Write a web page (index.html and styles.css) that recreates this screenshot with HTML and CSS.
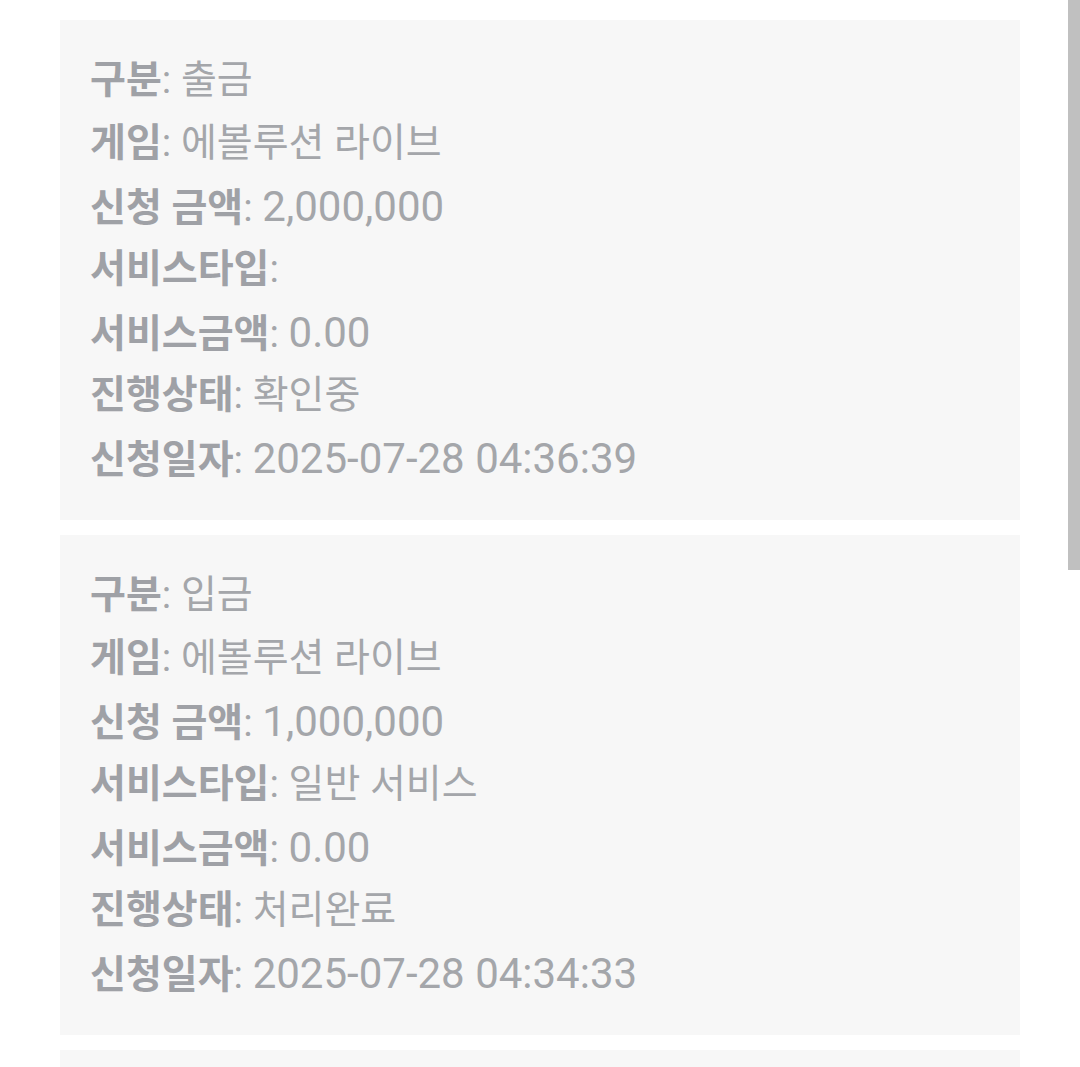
FILE: index.html
```html
<!DOCTYPE html>
<html lang="ko">
<head>
    <meta charset="UTF-8">
    <meta name="viewport" content="width=device-width, initial-scale=1.0">
    <title>입출금 내역</title>
    <link rel="stylesheet" href="styles.css">
</head>
<body>
    <div class="history">
        <div class="history-item">
            <p><b>구분</b>: 출금</p>
            <p><b>게임</b>: 에볼루션 라이브</p>
            <p><b>신청 금액</b>: <span class="num">2,000,000</span></p>
            <p><b>서비스타입</b>: </p>
            <p><b>서비스금액</b>: <span class="num">0.00</span></p>
            <p><b>진행상태</b>: 확인중</p>
            <p><b>신청일자</b>: <span class="num">2025-07-28 04:36:39</span></p>
        </div>
        <div class="history-item">
            <p><b>구분</b>: 입금</p>
            <p><b>게임</b>: 에볼루션 라이브</p>
            <p><b>신청 금액</b>: <span class="num">1,000,000</span></p>
            <p><b>서비스타입</b>: 일반 서비스</p>
            <p><b>서비스금액</b>: <span class="num">0.00</span></p>
            <p><b>진행상태</b>: 처리완료</p>
            <p><b>신청일자</b>: <span class="num">2025-07-28 04:34:33</span></p>
        </div>
        <div class="history-item">
            <p><b>구분</b>: 입금</p>
            <p><b>게임</b>: 에볼루션 라이브</p>
            <p><b>신청 금액</b>: <span class="num">500,000</span></p>
            <p><b>서비스타입</b>: 일반 서비스</p>
            <p><b>서비스금액</b>: <span class="num">0.00</span></p>
            <p><b>진행상태</b>: 처리완료</p>
            <p><b>신청일자</b>: <span class="num">2025-07-28 04:20:11</span></p>
        </div>
    </div>
    <div class="scrollbar"></div>
</body>
</html>
```

FILE: styles.css
```css
* {
    box-sizing: border-box;
    margin: 0;
    padding: 0;
}

html {
    overflow: hidden;
}

body {
    font-family: Roboto, "Noto Sans CJK KR", sans-serif;
    background-color: #fff;
    color: #a4a6aa;
}

.history {
    display: flex;
    flex-direction: column;
    gap: 15px;
    padding: 20px 60px;
}

.history-item {
    background-color: #f7f7f7;
    padding: 29px 30px 30px;
    height: 500px;
}

.history-item p {
    font-size: 39px;
    line-height: 63px;
    height: 63px;
    white-space: nowrap;
}

.history-item b {
    font-weight: bold;
    color: #9fa1a6;
}

.history-item .num {
    font-size: 42px;
}

.scrollbar {
    position: fixed;
    top: 0;
    right: 0;
    width: 12px;
    height: 570px;
    background-color: #c0c0c0;
}
```
